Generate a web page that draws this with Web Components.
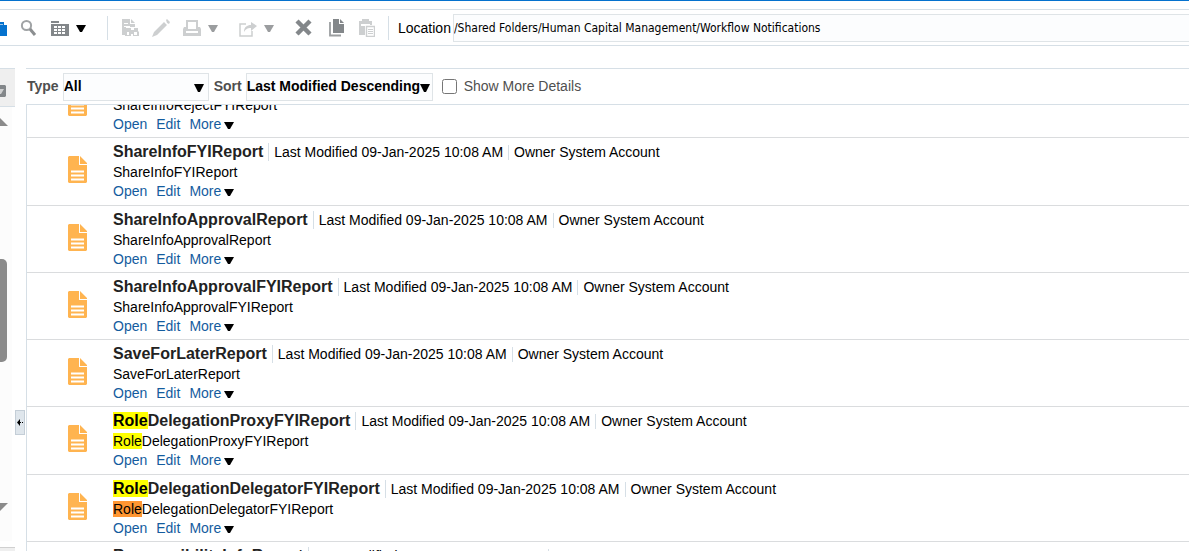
<!DOCTYPE html>
<html lang="en">
<head>
<meta charset="utf-8">
<title>Catalog</title>
<style>
  body { margin: 0; font: 14px/20px "Liberation Sans", Arial, sans-serif; color: #000; background: #fff; }
</style>
</head>
<body>
<catalog-page></catalog-page>
<script>
const define = (name, html, setup) => {
  const template = document.createElement('template');
  template.innerHTML = '<style>*{box-sizing:border-box}</style>' + html;
  customElements.define(name, class extends HTMLElement {
    constructor() {
      super();
      this.attachShadow({ mode: 'open' }).append(template.content.cloneNode(true));
    }
    connectedCallback() { if (setup) setup(this, this.shadowRoot); }
  });
};

/* Toolbar button: an icon, plus a drop arrow when it opens a menu */
define('tool-button', `
<style>
  :host { display: block; flex: none; }
  :host([menu]) { margin-right: 6px; }
  button { display: flex; align-items: center; gap: 7px; padding: 0; border: 0; background: none; color: #8b8e90; }
  .arrow { display: none; width: 12px; height: 18px; fill: #000; }
  :host([menu]) .arrow { display: block; }
  :host([disabled]) .arrow { fill: #9b9d9f; }
</style>
<button type="button"><slot></slot><svg class="arrow" viewBox="0 0 12 18" aria-hidden="true"><path d="M0 6h10l-4 7H4z"/></svg></button>
`, (host, root) => {
  const b = root.querySelector('button');
  b.setAttribute('aria-label', host.getAttribute('label'));
  b.disabled = host.hasAttribute('disabled');
});

/* Editable location path that fills the rest of the toolbar */
define('location-field', `
<style>
  :host { flex: 1; display: flex; align-items: center; min-width: 0; }
  i { width: 1px; height: 24px; background: #d6dfe6; margin-right: 9px; }
  label { margin-right: 2px; }
  input { flex: 1; min-width: 0; height: 28px; padding: 0; border: 1px solid #dfe4e7; border-right: 0; background: #fcfdfe; color: #000; font: 12px "DejaVu Sans Condensed", "Noto Sans", sans-serif; outline: 0; }
</style>
<i></i><label for="path">Location</label><input id="path" type="text" value="/Shared Folders/Human Capital Management/Workflow Notifications">
`);

define('catalog-toolbar', `
<style>
  :host { display: flex; align-items: center; gap: 13px; height: 37px; margin-top: 8px; border: solid #d6dfe6; border-width: 1px 0; }
  svg { display: block; width: 18px; height: 18px; }
  .cut { width: 7px; }
  .sep { width: 1px; height: 24px; background: #d6dfe6; }
</style>
<tool-button label="Home"><svg class="cut" viewBox="0 0 7 18"><path fill="#0572ce" d="M0 5V3h4v3h3v11H0z"/><path fill="#fff" d="M0 5h3v1H0z" opacity=".6"/></svg></tool-button>
<tool-button label="Search"><svg viewBox="0 0 18 18"><circle cx="6.5" cy="6.5" r="4.6" fill="none" stroke="#a0a3a5" stroke-width="2"/><path d="M10 10l5 6" stroke="#8b8e90" stroke-width="3"/></svg></tool-button>
<tool-button label="New" menu><svg viewBox="0 0 18 18"><path fill="#83878a" d="M0 2h8v2H0zM0 5h18v12H0z"/><path fill="#fff" d="M3 7h3v2H3zM7 7h3v2H7zM11 7h3v2h-3zM3 10h3v2H3zM7 10h3v2H7zM11 10h3v2h-3zM3 13h3v2H3zM7 13h3v2H7zM11 13h3v2h-3z"/></svg></tool-button>
<span class="sep"></span>
<tool-button label="View" disabled><svg viewBox="0 0 18 18"><path fill="#cdcfd0" d="M1 0h8v5h5v3H5v8H1zM10 0l4 4h-4z"/><path d="M3 4.500h4M3 7.500h6" stroke="#fff"/><path fill="#cdcfd0" fill-rule="evenodd" d="M5 9h5v2h3V9h4v3l1 1v4h-6v-2h-2v2H4v-5zm1 4v3h2v-3zm7 0v3h3v-3z"/></svg></tool-button>
<tool-button label="Edit" disabled><svg viewBox="0 0 18 18"><path fill="#cdcfd0" d="M14 1l1-1 3 3-1 2-2-1zM12 3l3 3L5 16l-5 2 2-5z"/></svg></tool-button>
<tool-button label="Print" menu disabled><svg viewBox="0 0 18 18"><path fill="#cdcfd0" fill-rule="evenodd" d="M3 1h12v7h2l1 2v7H0v-7l1-2h2zm2 2v7h8V3zM3 12v2h12v-2z"/></svg></tool-button>
<tool-button label="Export" menu disabled><svg viewBox="0 0 18 18"><path fill="none" stroke="#cdcfd0" stroke-width="1.500" d="M7 5H1v12h12v-5"/><path fill="#cdcfd0" d="M12 3l6 4-6 5V9c-4 0-5 1-7 4 0-5 3-7 7-7z"/></svg></tool-button>
<tool-button label="Delete"><svg viewBox="0 0 18 18"><path d="M2 2l13 13M15 2L2 15" stroke="#83878a" stroke-width="4.400"/></svg></tool-button>
<tool-button label="Copy"><svg viewBox="0 0 18 18"><path fill="#83878a" d="M7 0h6v5h5v9H7zM14 0l4 4h-4z"/><path fill="none" stroke="#9b9ea0" stroke-width="1.800" d="M4 3v13.500h11"/></svg></tool-button>
<tool-button label="Paste" disabled><svg viewBox="0 0 18 18"><path fill="#cdcfd0" fill-rule="evenodd" d="M2 2h3V0h7v2h3v4h-2V5H4v2h4v9H2z"/><path fill="#fff" stroke="#cdcfd0" stroke-width="1.400" d="M9.500 7.500h8v10h-8z"/><path d="M11 10.500h5M11 12.500h5M11 14.500h5" stroke="#cdcfd0"/></svg></tool-button>
<location-field></location-field>
`);

/* Left folder panel, scrolled almost out of view */
define('side-panel', `
<style>
  :host { display: flex; flex-direction: column; width: 15px; }
  header { display: flex; align-items: center; height: 39px; padding-top: 6px; border: solid #d6dfe6; border-width: 1px 0; background: #efefef; }
  .scroll { flex: 1; display: flex; flex-direction: column; width: 12px; padding: 11px 0 30px; background: #fcfcfc; }
  .track { flex: 1; padding-top: 133px; }
  .thumb { width: 7px; height: 103px; background: #8b8b8b; border-radius: 0 5px 5px 0; }
  svg { display: block; }
  footer { height: 4px; margin-top: 6px; border-top: 1px solid #d0d0d0; background: #efefef; }
</style>
<header><svg width="6" height="12"><path fill="#83878a" d="M0 0h5l1 1v10l-1 1H0z"/><path fill="#efefef" d="M0 4h4L1 9H0z" opacity=".7"/></svg></header>
<div class="scroll">
  <svg width="8" height="8"><path fill="#8b8b8b" d="M0 0l8 8H0z"/></svg>
  <div class="track"><div class="thumb"></div></div>
  <svg width="8" height="8"><path fill="#8b8b8b" d="M0 0h8L0 8z"/></svg>
</div>
<footer></footer>
`);

define('panel-splitter', `
<style>
  :host { display: flex; align-items: flex-start; width: 11px; padding-top: 342px; }
  button { display: grid; place-items: center; width: 10px; height: 25px; padding: 0; border: 1px solid #c4ced7; background: #dfe6ec; }
</style>
<button type="button" aria-label="Collapse pane"><svg width="8" height="7"><path d="M1 3.500L4 0v7z"/><path d="M4 3h1v1H4zM6 3h1v1H6z"/></svg></button>
`);

/* Type and sort drop-downs, with the details tick box */
define('filter-bar', `
<style>
  :host { display: flex; align-items: center; height: 36px; padding-left: 1px; border-top: 1px solid #d6dfe6; color: #4f4f4f; }
  label { padding-bottom: 2px; }
  .bold { font-weight: bold; }
  .drop { display: grid; align-items: center; height: 28px; margin: 0 5px 0 4px; border: 1px solid #dfe4e7; background: #fcfdfe; }
  .type { width: 146px; }
  .sort { width: 187px; margin-right: 9px; }
  select { grid-area: 1/1; width: 100%; height: 26px; margin: 0; padding: 0 10px 2px 0; border: 0; background: none; appearance: none; font: bold 14px "Liberation Sans", Arial, sans-serif; color: #000; }
  svg { grid-area: 1/1; justify-self: end; width: 10px; height: 8px; margin: 3px 4px 0 0; pointer-events: none; }
  .sort svg { margin-right: 2px; }
  input { width: 15px; height: 15px; margin: 0 7px 0 0; }
</style>
<label class="bold" for="type">Type</label>
<span class="drop type"><select id="type"><option>All</option></select><svg viewBox="0 0 10 8"><path d="M0 0h10L6 8H4z"/></svg></span>
<label class="bold" for="sort">Sort</label>
<span class="drop sort"><select id="sort"><option>Last Modified Descending</option></select><svg viewBox="0 0 10 8"><path d="M0 0h10L6 8H4z"/></svg></span>
<input type="checkbox" id="more"><label for="more">Show More Details</label>
`);

/* One report in the list */
define('catalog-item', `
<style>
  :host { display: flex; min-height: 67px; padding: 4px 0 2px 41px; border-bottom: 1px solid #dadcde; }
  .icon { flex: none; width: 19px; height: 27px; margin: 14px 26px 0 0; }
  .head { display: flex; align-items: center; white-space: nowrap; }
  :host([scrolled]) .head { visibility: hidden; }
  h2 { margin: 0; font-size: 16px; line-height: 20px; color: #222; }
  .head span { display: flex; align-items: center; }
  .head span::before { content: ""; width: 1px; height: 15px; margin: 0 5px; background: #d6dfe6; }
  .head h2 + span::before { height: 18px; }
  p { margin: 0; }
  nav { display: flex; gap: 9px; line-height: 19px; }
  a { color: #145c9e; text-decoration: none; }
  nav svg { width: 10px; height: 7px; margin-left: 3px; fill: #000; }
  mark { background: #ff0; color: #000; }
  mark.current { background: #ff9632; }
</style>
<svg class="icon" viewBox="0 0 19 27" aria-hidden="true"><path fill="#ffb450" d="M1 0h10v9h8v17l-1 1H1l-1-1V1zM12 0l7 7v1h-7z"/><path d="M3 15.500h13M3 19.500h13M3 23.500h13" stroke="#fff" stroke-width="1.800"/></svg>
<div>
  <div class="head"><h2></h2><span>Last Modified 09-Jan-2025 10:08 AM</span><span>Owner System Account</span></div>
  <p></p>
  <nav><a href="#">Open</a><a href="#">Edit</a><a href="#">More<svg viewBox="0 0 10 7"><path d="M0 0h10L6 7H4z"/></svg></a></nav>
</div>
`, (host, root) => {
  const name = host.getAttribute('name');
  const find = host.getAttribute('find');
  const fill = (el, current) => {
    if (find && name.startsWith(find)) {
      const mark = document.createElement('mark');
      mark.textContent = find;
      if (current) mark.className = 'current';
      el.replaceChildren(mark, name.slice(find.length));
    } else el.textContent = name;
  };
  fill(root.querySelector('h2'));
  fill(root.querySelector('p'), host.hasAttribute('current'));
});

/* Scrolling list; the offset attribute is the starting scroll position */
define('catalog-list', `
<style>
  :host { display: block; flex: 1; min-height: 0; overflow: hidden; border: solid #d6dfe6; border-width: 1px 0 0 1px; }
  ::slotted(:nth-child(4n+2)) { min-height: 68px; }
</style>
<slot></slot>
`, host => requestAnimationFrame(() => { host.scrollTop = +host.getAttribute('offset'); }));

define('catalog-page', `
<style>
  :host { display: flex; flex-direction: column; height: 100vh; overflow: hidden; border-top: 1px solid #0572ce; box-sizing: border-box; }
  main { flex: 1; display: flex; min-height: 0; margin-top: 22px; }
  section { flex: 1; display: flex; flex-direction: column; min-width: 0; }
</style>
<catalog-toolbar></catalog-toolbar>
<main>
  <side-panel></side-panel>
  <panel-splitter></panel-splitter>
  <section>
    <filter-bar></filter-bar>
    <catalog-list offset="34">
      <catalog-item name="ShareInfoRejectFYIReport" scrolled></catalog-item>
      <catalog-item name="ShareInfoFYIReport"></catalog-item>
      <catalog-item name="ShareInfoApprovalReport"></catalog-item>
      <catalog-item name="ShareInfoApprovalFYIReport"></catalog-item>
      <catalog-item name="SaveForLaterReport"></catalog-item>
      <catalog-item name="RoleDelegationProxyFYIReport" find="Role"></catalog-item>
      <catalog-item name="RoleDelegationDelegatorFYIReport" find="Role" current></catalog-item>
      <catalog-item name="ResponsibilityInfoReport"></catalog-item>
    </catalog-list>
  </section>
</main>
`);
</script>
</body>
</html>
